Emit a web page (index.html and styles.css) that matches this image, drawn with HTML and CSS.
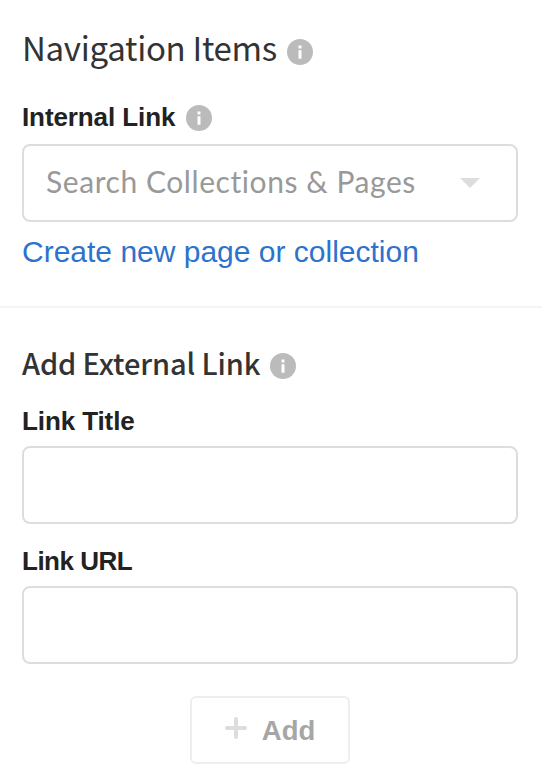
FILE: index.html
```html
<!DOCTYPE html>
<html lang="en">
<head>
    <meta charset="UTF-8">
    <meta name="viewport" content="width=device-width, initial-scale=1.0">
    <title>Navigation Items</title>
    <link rel="stylesheet" href="styles.css">
</head>
<body>
    <section class="internal">
        <div class="row title-row">
            <h1>Navigation Items</h1>
            <svg class="info" viewBox="0 0 26 26"><circle cx="13" cy="13" r="13"/><path d="M11.5 6.5h3v3h-3zM11.5 11.2h3v8.6h-3z"/></svg>
        </div>
        <div class="row label-row">
            <label class="field-label" for="search">Internal Link</label>
            <svg class="info" viewBox="0 0 26 26"><circle cx="13" cy="13" r="13"/><path d="M11.5 6.5h3v3h-3zM11.5 11.2h3v8.6h-3z"/></svg>
        </div>
        <div class="select" id="search">
            <span class="placeholder">Search Collections &amp; Pages</span>
            <span class="arrow"></span>
        </div>
        <a class="create-link" href="#">Create new page or collection</a>
    </section>
    <section class="external">
        <div class="row external-row">
            <h2>Add External Link</h2>
            <svg class="info" viewBox="0 0 26 26"><circle cx="13" cy="13" r="13"/><path d="M11.5 6.5h3v3h-3zM11.5 11.2h3v8.6h-3z"/></svg>
        </div>
        <label class="field-label" for="linkTitle">Link Title</label>
        <input class="text-input" type="text" id="linkTitle">
        <label class="field-label url-label" for="linkUrl">Link URL</label>
        <input class="text-input" type="text" id="linkUrl">
        <button class="add-button" type="button">
            <svg class="plus" viewBox="0 0 22 22"><path d="M11 2v18M2 11h18"/></svg>
            <span>Add</span>
        </button>
    </section>
</body>
</html>
```
FILE: styles.css
```css
* {
    box-sizing: border-box;
}

body {
    margin: 0;
    background: #fff;
    color: #222;
    font-family: "Liberation Sans", Arial, sans-serif;
}

h1, h2 {
    margin: 0;
    color: #333;
    font-family: "Noto Sans CJK SC", "Noto Sans", sans-serif;
    white-space: nowrap;
}

h1 {
    padding-bottom: 10px;
    font-size: 33px;
    font-weight: 400;
    letter-spacing: -0.3px;
    line-height: 46px;
}

h2 {
    padding-bottom: 8px;
    font-size: 29px;
    font-weight: 500;
    letter-spacing: -0.12px;
    line-height: 40px;
}

.internal {
    height: 308px;
    padding: 24px 24px 0 22px;
    border-bottom: 2px solid #f4f4f4;
}

.external {
    padding: 34px 24px 0 22px;
}

.row {
    display: flex;
    align-items: center;
    gap: 10px;
}

.title-row {
    height: 56px;
}

.label-row {
    height: 64px;
    padding-top: 12px;
}

.external-row {
    height: 48px;
    margin-bottom: 11px;
}

.info {
    flex: none;
    width: 26px;
    height: 26px;
    fill: #bbb;
}

.info path {
    fill: #fff;
}

.field-label {
    display: block;
    margin-bottom: 5px;
    font-size: 26px;
    font-weight: bold;
    letter-spacing: -0.1px;
    line-height: 40px;
}

.label-row .field-label {
    margin: 0 1px 2px 0;
}

.url-label {
    letter-spacing: -0.5px;
}

.select {
    display: flex;
    align-items: center;
    justify-content: space-between;
    height: 78px;
    padding: 0 36px 0 22px;
    border: 2px solid #ddd;
    border-radius: 8px;
}

.placeholder {
    padding-bottom: 4px;
    color: #999;
    font-family: Lato, sans-serif;
    font-size: 30px;
    letter-spacing: 0.57px;
}

.arrow {
    border: 10px solid transparent;
    border-top-color: #ddd;
    border-bottom: 0;
}

.create-link {
    display: block;
    color: #2d72cc;
    font-size: 30px;
    line-height: 60px;
    text-decoration: none;
}

.text-input {
    display: block;
    width: 100%;
    height: 78px;
    margin-bottom: 17px;
    padding: 0 22px;
    border: 2px solid #ddd;
    border-radius: 8px;
    font-size: 28px;
}

.add-button {
    display: flex;
    align-items: center;
    justify-content: center;
    gap: 15px;
    width: 160px;
    height: 68px;
    margin: 32px auto 0;
    padding: 2px 6px 0;
    border: 2px solid #eee;
    border-radius: 6px;
    background: #fff;
    color: #a6a6a6;
    font: bold 27.5px "Liberation Sans", Arial, sans-serif;
}

.plus {
    width: 22px;
    height: 22px;
    margin-bottom: 6px;
    stroke: #ddd;
    stroke-width: 4;
    stroke-linecap: round;
}
```
